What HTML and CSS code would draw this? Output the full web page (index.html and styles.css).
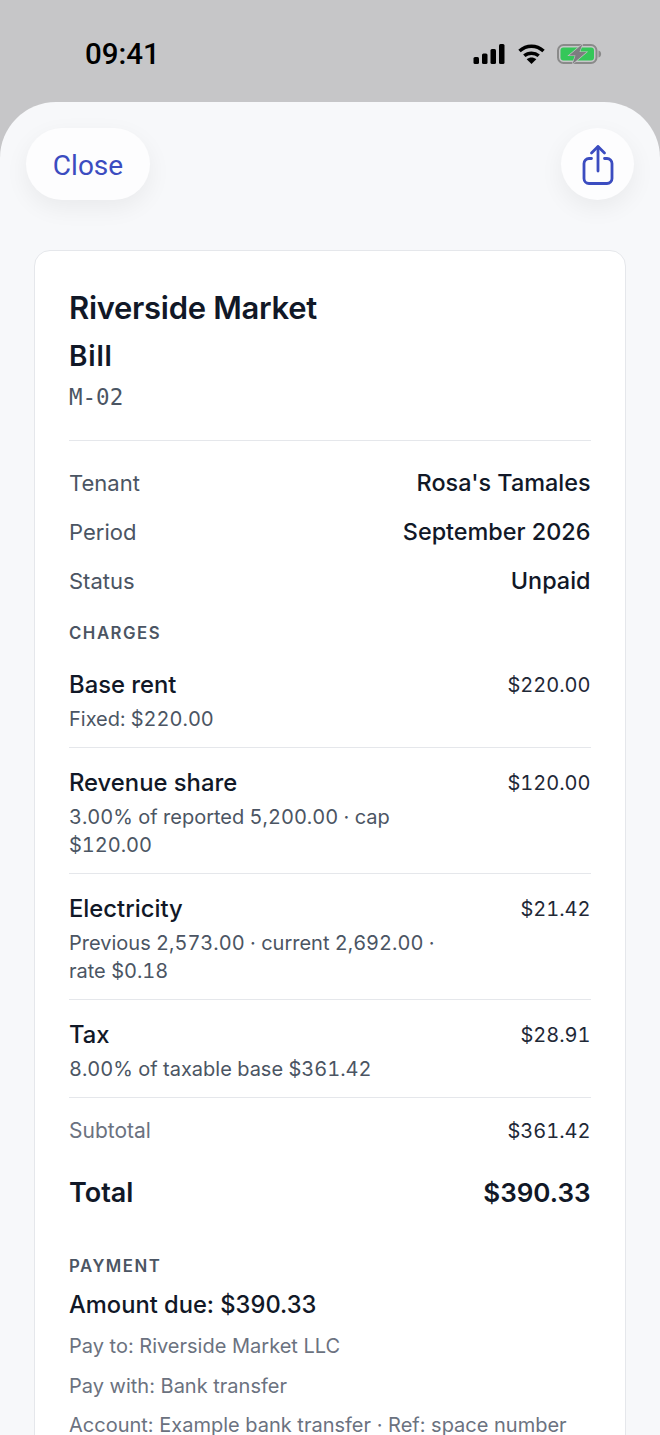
FILE: index.html
```html
<!DOCTYPE html>
<html lang="en">
<head>
    <meta charset="UTF-8">
    <meta name="viewport" content="width=device-width, initial-scale=1.0">
    <title>Bill</title>
    <link rel="stylesheet" href="styles.css">
</head>
<body>

    <div class="status-bar">
        <span class="clock">09:41</span>
        <div class="status-icons">
            <svg width="32" height="20" viewBox="0 0 32 20"><rect x="0.500" y="13" width="5.500" height="7" rx="1.500"/><rect x="9" y="9.500" width="5.500" height="10.500" rx="1.500"/><rect x="17.500" y="5" width="5.500" height="15" rx="1.500"/><rect x="26" y="0" width="5.500" height="20" rx="1.500"/></svg>
            <svg width="27" height="20" viewBox="0 0 27 20" fill="none" stroke="#000" stroke-width="3.500"><path d="M1.500 7C8.500 .5 18.500 .5 25.500 7"/><path d="M6.300 11.800C10.300 8.300 16.700 8.300 20.700 11.800"/><path d="M13.500 20L8.700 15.200C11.500 13 15.500 13 18.300 15.200Z" fill="#000" stroke="none"/></svg>
            <svg width="45" height="20" viewBox="0 0 45 20"><rect x="1" y="1" width="38.500" height="18" rx="5.500" fill="none" stroke="#8a8a8a" stroke-width="2"/><rect x="3.500" y="3.500" width="33.500" height="13" rx="3" fill="#34c759"/><path d="M41.500 6.500c3.500.8 3.500 6.200 0 7z" fill="#8a8a8a"/><path d="M25.500 0L12 11.500H18.500L15.500 20L29.500 8H22.500Z" fill="#7d7d80" stroke="#c6c6c8" stroke-width="1.200" paint-order="stroke"/></svg>
        </div>
    </div>

    <div class="sheet">
        <div class="sheet-top">
            <button class="close-btn">Close</button>
            <button class="share-btn">
                <svg width="34" height="44" viewBox="0 0 34 44" fill="none" stroke="#3b4cc0" stroke-width="2.800" stroke-linecap="round" stroke-linejoin="round"><path d="M17 29V5"/><path d="M10.500 11L17 4.500L23.500 11"/><path d="M10.500 16.500H8a5 5 0 0 0-5 5v15a5 5 0 0 0 5 5h18a5 5 0 0 0 5-5v-15a5 5 0 0 0-5-5h-2.500"/></svg>
            </button>
        </div>

        <div class="card">
            <h1>Riverside Market</h1>
            <h2>Bill</h2>
            <p class="bill-code">M-02</p>

            <div class="meta">
                <div class="meta-row"><span>Tenant</span><strong>Rosa's Tamales</strong></div>
                <div class="meta-row"><span>Period</span><strong>September 2026</strong></div>
                <div class="meta-row"><span>Status</span><strong>Unpaid</strong></div>
            </div>

            <h3 class="section-title">CHARGES</h3>

            <div class="charges">
                <div class="charge">
                    <div class="charge-info">
                        <div class="charge-name">Base rent</div>
                        <div class="charge-note">Fixed: $220.00</div>
                    </div>
                    <div class="charge-amount">$220.00</div>
                </div>
                <div class="charge">
                    <div class="charge-info">
                        <div class="charge-name">Revenue share</div>
                        <div class="charge-note">3.00% of reported 5,200.00 · cap $120.00</div>
                    </div>
                    <div class="charge-amount">$120.00</div>
                </div>
                <div class="charge">
                    <div class="charge-info">
                        <div class="charge-name">Electricity</div>
                        <div class="charge-note">Previous 2,573.00 · current 2,692.00 · rate $0.18</div>
                    </div>
                    <div class="charge-amount">$21.42</div>
                </div>
                <div class="charge">
                    <div class="charge-info">
                        <div class="charge-name">Tax</div>
                        <div class="charge-note">8.00% of taxable base $361.42</div>
                    </div>
                    <div class="charge-amount">$28.91</div>
                </div>
            </div>

            <div class="subtotal"><span>Subtotal</span><span class="subtotal-amount">$361.42</span></div>
            <div class="total"><span>Total</span><span class="total-amount">$390.33</span></div>

            <h3 class="section-title payment-title">PAYMENT</h3>
            <div class="amount-due">Amount due: $390.33</div>
            <p class="pay-line">Pay to: Riverside Market LLC</p>
            <p class="pay-line">Pay with: Bank transfer</p>
            <p class="pay-line">Account: Example bank transfer · Ref: space number</p>
        </div>
    </div>

</body>
</html>
```

FILE: styles.css
```css
* {
    margin: 0;
    padding: 0;
    box-sizing: border-box;
}

html, body {
    height: 1435px;
    overflow: hidden;
}

body {
    font-family: Inter, "Noto Sans", sans-serif;
    background-color: #c6c6c8;
    color: #111827;
}

.status-bar {
    height: 102px;
    padding: 38px 58px 0 85px;
    display: flex;
    justify-content: space-between;
    align-items: flex-start;
}

.clock {
    font-family: Roboto, sans-serif;
    font-size: 29.500px;
    line-height: 32px;
    font-weight: 500;
    color: #000;
}

.status-icons {
    display: flex;
    align-items: center;
    gap: 12.500px;
    height: 31px;
}

.sheet {
    height: 1333px;
    background-color: #f7f8fa;
    border-radius: 56px 56px 0 0;
    padding: 26px 26px 0;
}

.sheet-top {
    display: flex;
    justify-content: space-between;
    margin-bottom: 50px;
}

.close-btn, .share-btn {
    height: 72px;
    border: none;
    background-color: #fdfdfe;
    box-shadow: 0 8px 24px rgba(0, 0, 0, 0.06);
    color: #3b4cc0;
}

.close-btn {
    width: 124px;
    padding-top: 2px;
    border-radius: 36px;
    font-family: Roboto, sans-serif;
    font-size: 28px;
}

.share-btn {
    width: 73px;
    border-radius: 50%;
    display: flex;
    justify-content: center;
    align-items: center;
}

.card {
    margin: 0 8px;
    height: 1300px;
    background-color: white;
    border: 1px solid #e5e7eb;
    border-radius: 16px;
    padding: 35px 34.500px 35px 34px;
}

h1 {
    font-size: 31px;
    line-height: 44px;
    font-weight: 600;
    letter-spacing: -0.300px;
}

h2 {
    font-size: 28px;
    line-height: 36px;
    margin-top: 8px;
    font-weight: 600;
    letter-spacing: 0.800px;
}

.bill-code {
    font-family: "DejaVu Sans Mono", monospace;
    font-size: 22.500px;
    line-height: 32px;
    margin-top: 7px;
    color: #4b5563;
    padding-bottom: 27px;
    border-bottom: 1px solid #e5e7eb;
}

.meta {
    padding-top: 17px;
}

.meta-row {
    display: flex;
    justify-content: space-between;
    align-items: center;
    height: 49px;
    font-size: 22px;
    color: #4b5563;
}

.meta-row strong {
    font-size: 23.400px;
    font-weight: 500;
    color: #111827;
}

.section-title {
    font-size: 16.800px;
    line-height: 24px;
    font-weight: 600;
    letter-spacing: 1.500px;
    color: #4b5563;
    margin-top: 16px;
}

.charges {
    margin-top: 5px;
}

.charge {
    display: flex;
    justify-content: space-between;
    align-items: flex-start;
    padding: 18px 0 14px;
    border-bottom: 1px solid #e5e7eb;
}

.charge-info {
    width: 380px;
}

.charge-name {
    font-size: 23.800px;
    line-height: 34px;
    font-weight: 500;
}

.charge-note {
    font-size: 20px;
    line-height: 28px;
    color: #4b5563;
    margin-top: 3px;
    font-variant-numeric: tabular-nums;
}

.charge-amount {
    font-size: 20px;
    line-height: 34px;
    color: #1f2937;
    font-variant-numeric: tabular-nums;
}

.subtotal {
    display: flex;
    justify-content: space-between;
    align-items: center;
    height: 65px;
    font-size: 21px;
    color: #6b7280;
}

.subtotal-amount {
    font-size: 20px;
    color: #1f2937;
    font-variant-numeric: tabular-nums;
}

.total {
    display: flex;
    justify-content: space-between;
    align-items: center;
    margin-top: 10px;
    font-size: 27px;
    line-height: 40px;
    font-weight: 600;
}

.total-amount {
    font-size: 26px;
}

.payment-title {
    margin-top: 41px;
}

.amount-due {
    font-size: 23.700px;
    line-height: 32px;
    font-weight: 500;
    margin-top: 11px;
}

.pay-line {
    font-size: 20px;
    line-height: 30px;
    color: #6b7280;
    margin-top: 9.800px;
}
```
